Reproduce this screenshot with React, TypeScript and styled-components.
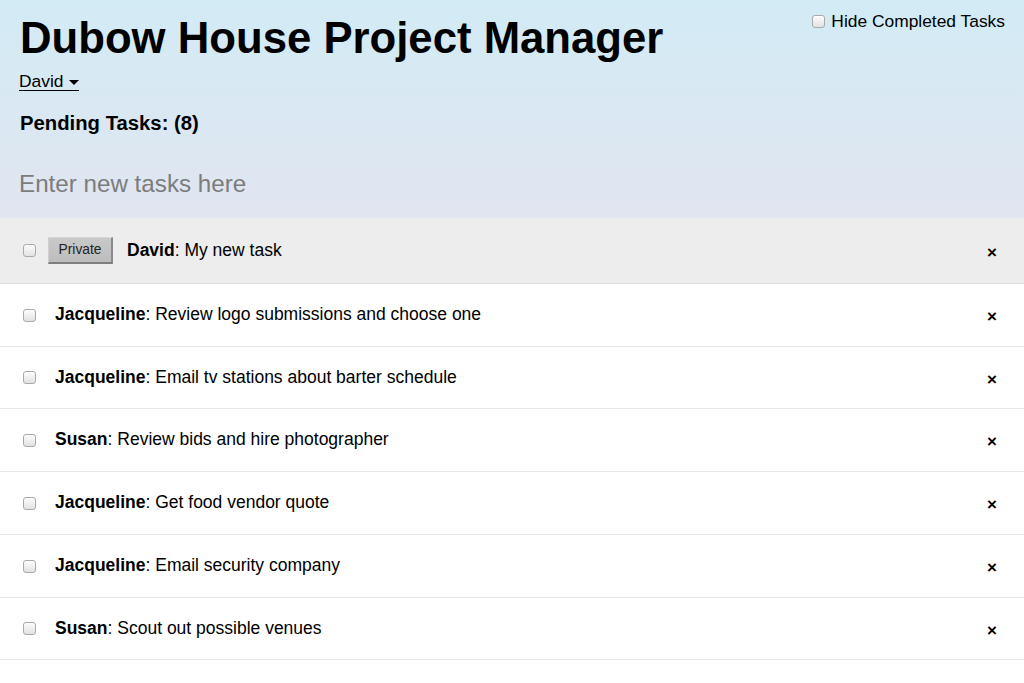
import React from "react";
import styled, { createGlobalStyle } from "styled-components";

const Global = createGlobalStyle`
  html, body {
    margin: 0;
    padding: 0;
    overflow: hidden;
    background: #ffffff;
  }
  body {
    font-family: "Liberation Sans", Arial, Helvetica, sans-serif;
    color: #000;
  }
`;

const Page = styled.div`
  width: 1024px;
  min-height: 683px;
  background: #fff;
`;

const Header = styled.header`
  box-sizing: border-box;
  height: 218px;
  padding: 12px 19px 0 19px;
  background-image: linear-gradient(to bottom, #d2ebf5, #e1e5f0 100%);
  display: flex;
  flex-direction: column;
`;

const TopLine = styled.div`
  display: flex;
  justify-content: space-between;
  align-items: flex-start;
`;

const Title = styled.h1`
  margin: 0 0 0 1px;
  font-size: 43.7px;
  line-height: 51px;
  font-weight: bold;
  letter-spacing: 0;
`;

const HideLabel = styled.label`
  display: flex;
  align-items: center;
  gap: 6px;
  margin-top: 0px;
  font-size: 17.4px;
  line-height: 18px;
`;

const Box = styled.input.attrs({ type: "checkbox" })`
  appearance: none;
  -webkit-appearance: none;
  box-sizing: border-box;
  width: 13px;
  height: 13px;
  margin: 0;
  flex: none;
  border: 1px solid #a9a9a9;
  border-radius: 3px;
  background: linear-gradient(to bottom, #fcfcfc, #e2e2e2);
  box-shadow: inset 0 1px 0 #fff;
`;

const UserLink = styled.a`
  align-self: flex-start;
  margin-top: 9px;
  display: inline-flex;
  align-items: center;
  gap: 6px;
  font-size: 17.4px;
  line-height: 18px;
  color: #000;
  border-bottom: 1px solid #000;
  padding-bottom: 0;
  cursor: pointer;
`;

const Caret = styled.span`
  width: 0;
  height: 0;
  border-left: 5px solid transparent;
  border-right: 5px solid transparent;
  border-top: 5px solid #000;
  margin-top: 2px;
`;

const Pending = styled.h2`
  margin: 21px 0 0 1px;
  font-size: 20.3px;
  line-height: 23px;
  font-weight: bold;
`;

const NewTask = styled.input`
  margin: 35px 0 0 0;
  padding: 0;
  border: none;
  background: transparent;
  font-family: "Liberation Sans", Arial, sans-serif;
  font-size: 24.2px;
  line-height: 28px;
  width: 100%;
  outline: none;
  &::placeholder {
    color: #7c7c7c;
  }
`;

const List = styled.ul`
  margin: 0;
  padding: 0;
  list-style: none;
`;

const Row = styled.li<{ $private?: boolean; $h: number }>`
  display: flex;
  align-items: center;
  height: ${(p) => p.$h}px;
  padding: 0 27px 0 23px;
  background: ${(p) => (p.$private ? "#ededed" : "#fff")};
  border-bottom: 1px solid ${(p) => (p.$private ? "#dcdcdc" : "#e8e8e8")};
  font-size: 17.5px;
  line-height: 20px;
`;

const PrivateBtn = styled.button`
  box-sizing: border-box;
  margin-left: 12px;
  height: 27px;
  width: 65px;
  padding: 0 0 1px 0;
  font-family: "Liberation Sans", Arial, sans-serif;
  font-size: 13.8px;
  color: #222;
  background: linear-gradient(to bottom, #c9c9c9, #bdbdbd);
  border-top: 1px solid #d6d6d6;
  border-left: 1px solid #d0d0d0;
  border-right: 2px solid #8a8a8a;
  border-bottom: 2px solid #7e7e7e;
  border-radius: 0;
`;

const Text = styled.span<{ $withBtn?: boolean }>`
  flex: 1;
  margin-left: ${(p) => (p.$withBtn ? "14px" : "19px")};
  margin-top: -2px;
`;

const Name = styled.strong`
  font-weight: bold;
`;

const Delete = styled.button`
  background: none;
  border: none;
  padding: 0;
  margin-top: 4px;
  font-family: "Liberation Sans", Arial, sans-serif;
  font-weight: bold;
  font-size: 17px;
  line-height: 16px;
  color: #000;
`;

type Task = { name: string; text: string; priv?: boolean };

const tasks: Task[] = [
  { name: "David", text: "My new task", priv: true },
  { name: "Jacqueline", text: "Review logo submissions and choose one" },
  { name: "Jacqueline", text: "Email tv stations about barter schedule" },
  { name: "Susan", text: "Review bids and hire photographer" },
  { name: "Jacqueline", text: "Get food vendor quote" },
  { name: "Jacqueline", text: "Email security company" },
  { name: "Susan", text: "Scout out possible venues" },
  { name: "Susan", text: "Book the caterer" },
];

const heights = [65, 62, 61, 62, 62, 62, 61, 62];

export default function App() {
  return (
    <Page>
      <Global />
      <Header>
        <TopLine>
          <Title>Dubow House Project Manager</Title>
          <HideLabel>
            <Box />
            Hide Completed Tasks
          </HideLabel>
        </TopLine>
        <UserLink>
          David
          <Caret />
        </UserLink>
        <Pending>Pending Tasks: (8)</Pending>
        <NewTask placeholder="Enter new tasks here" />
      </Header>
      <List>
        {tasks.map((t, i) => (
          <Row key={i} $private={t.priv} $h={heights[i]}>
            <Box />
            {t.priv && <PrivateBtn>Private</PrivateBtn>}
            <Text $withBtn={t.priv}>
              <Name>{t.name}</Name>: {t.text}
            </Text>
            <Delete>×</Delete>
          </Row>
        ))}
      </List>
    </Page>
  );
}
